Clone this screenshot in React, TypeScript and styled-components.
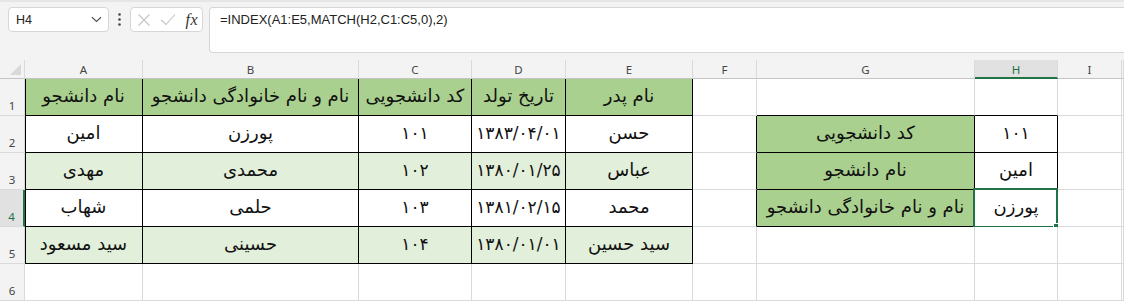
import React from 'react'
import styled, { createGlobalStyle } from 'styled-components'

const GlobalStyle = createGlobalStyle`
  html, body { margin: 0; padding: 0; background: #fff; overflow: hidden; }
  body { font-family: "Liberation Sans", Arial, sans-serif; }
`

const GREEN = '#a9d08e'
const PALE = '#e2efda'
const GRID = '#dadada'
const SEL = '#217346'

const colNames = ['A', 'B', 'C', 'D', 'E', 'F', 'G', 'H', 'I']
const colWidths = '25px 118px 216px 113px 94px 127px 64px 218px 83px 64px 1fr'

type CellData = { text: string; fill?: string; boxed?: boolean; num?: boolean }

// row index -> column index (0 = A) -> data
const sheet: Record<number, Record<number, CellData>> = {
  1: {
    0: { text: 'نام دانشجو', fill: GREEN, boxed: true },
    1: { text: 'نام و نام خانوادگی دانشجو', fill: GREEN, boxed: true },
    2: { text: 'کد دانشجویی', fill: GREEN, boxed: true },
    3: { text: 'تاریخ تولد', fill: GREEN, boxed: true },
    4: { text: 'نام پدر', fill: GREEN, boxed: true },
  },
  2: {
    0: { text: 'امین', boxed: true },
    1: { text: 'پورزن', boxed: true },
    2: { text: '۱۰۱', boxed: true, num: true },
    3: { text: '۱۳۸۳/۰۴/۰۱', boxed: true, num: true },
    4: { text: 'حسن', boxed: true },
    6: { text: 'کد دانشجویی', fill: GREEN, boxed: true },
    7: { text: '۱۰۱', boxed: true, num: true },
  },
  3: {
    0: { text: 'مهدی', fill: PALE, boxed: true },
    1: { text: 'محمدی', fill: PALE, boxed: true },
    2: { text: '۱۰۲', fill: PALE, boxed: true, num: true },
    3: { text: '۱۳۸۰/۰۱/۲۵', fill: PALE, boxed: true, num: true },
    4: { text: 'عباس', fill: PALE, boxed: true },
    6: { text: 'نام دانشجو', fill: GREEN, boxed: true },
    7: { text: 'امین', boxed: true },
  },
  4: {
    0: { text: 'شهاب', boxed: true },
    1: { text: 'حلمی', boxed: true },
    2: { text: '۱۰۳', boxed: true, num: true },
    3: { text: '۱۳۸۱/۰۲/۱۵', boxed: true, num: true },
    4: { text: 'محمد', boxed: true },
    6: { text: 'نام و نام خانوادگی دانشجو', fill: GREEN, boxed: true },
    7: { text: 'پورزن', boxed: true },
  },
  5: {
    0: { text: 'سید مسعود', fill: PALE, boxed: true },
    1: { text: 'حسینی', fill: PALE, boxed: true },
    2: { text: '۱۰۴', fill: PALE, boxed: true, num: true },
    3: { text: '۱۳۸۰/۰۱/۰۱', fill: PALE, boxed: true, num: true },
    4: { text: 'سید حسین', fill: PALE, boxed: true },
  },
}

const isBoxed = (r: number, c: number) => !!sheet[r]?.[c]?.boxed
const activeRow = 4
const activeCol = 7

const Toolbar = styled.div`
  height: 60px;
  box-sizing: border-box;
  background: #f3f3f3;
  border-top: 2px solid #e6e6e6;
  display: flex;
  align-items: flex-start;
  padding: 5px 0 0 8px;
`

const NameBox = styled.div`
  width: 101px;
  height: 25px;
  box-sizing: border-box;
  background: #fff;
  border: 1px solid #d6d6d6;
  border-radius: 4px;
  display: flex;
  align-items: center;
  justify-content: space-between;
  padding: 0 6px 0 7px;
  font-size: 12.5px;
  color: #222;
`

const Dots = styled.div`
  width: 21px;
  height: 25px;
  display: flex;
  align-items: center;
  justify-content: center;
`

const FuncBox = styled.div`
  width: 73px;
  height: 25px;
  box-sizing: border-box;
  background: #fff;
  border: 1px solid #d6d6d6;
  border-radius: 4px;
  display: flex;
  align-items: center;
  justify-content: space-between;
  padding: 0 4px 0 6px;
`

const Fx = styled.span`
  font-family: "Liberation Serif", "Times New Roman", serif;
  font-style: italic;
  font-size: 16px;
  color: #333;
  letter-spacing: 0.5px;
`

const FormulaBox = styled.div`
  flex: 1;
  height: 46px;
  margin-left: 6px;
  box-sizing: border-box;
  background: #fff;
  border: 1px solid #d6d6d6;
  border-right: none;
  border-radius: 4px 0 0 4px;
  padding: 4px 0 0 10px;
  font-size: 13px;
  color: #222;
  line-height: 16px;
`

const Sheet = styled.div`
  display: grid;
  grid-template-columns: ${colWidths};
  grid-template-rows: 19px repeat(6, 37px);
`

const Corner = styled.div`
  background: #f3f3f3;
  border-right: 1px solid ${GRID};
  border-bottom: 1px solid #c4c4c4;
  box-sizing: border-box;
  display: flex;
  align-items: flex-end;
  justify-content: flex-end;
  padding: 0 3px 3px 0;
`

const ColHead = styled.div<{ $active?: boolean }>`
  box-sizing: border-box;
  background: ${p => (p.$active ? '#e1e1e1' : '#f3f3f3')};
  border-right: 1px solid ${GRID};
  border-bottom: ${p => (p.$active ? `2px solid ${SEL}` : '1px solid #c4c4c4')};
  color: ${p => (p.$active ? SEL : '#444')};
  font-family: "Noto Sans", "Open Sans", sans-serif;
  font-size: 11.5px;
  display: flex;
  align-items: center;
  justify-content: center;
  padding-top: ${p => (p.$active ? '1px' : '0')};
`

const RowHead = styled.div<{ $active?: boolean }>`
  box-sizing: border-box;
  background: ${p => (p.$active ? '#e1e1e1' : '#f3f3f3')};
  border-right: ${p => (p.$active ? `2px solid ${SEL}` : `1px solid ${GRID}`)};
  border-bottom: 1px solid ${GRID};
  color: ${p => (p.$active ? SEL : '#444')};
  font-family: "Noto Sans", "Open Sans", sans-serif;
  font-size: 11.5px;
  display: flex;
  align-items: flex-end;
  justify-content: center;
  padding-bottom: 2px;
`

const Cell = styled.div<{ $fill?: string; $right: string; $bottom: string; $leftEdge?: boolean; $num?: boolean }>`
  position: relative;
  box-sizing: border-box;
  background: ${p => p.$fill || '#fff'};
  border-right: 1px solid ${p => p.$right};
  border-bottom: 1px solid ${p => p.$bottom};
  box-shadow: ${p => (p.$leftEdge ? 'inset 1px 0 0 #000' : 'none')};
  display: flex;
  align-items: center;
  justify-content: center;
  white-space: nowrap;
  font-family: "DejaVu Sans", "Noto Sans", sans-serif;
  font-size: ${p => (p.$num ? '17px' : '18px')};
  color: #111;
  padding-bottom: 3px;
`

const Selection = styled.div`
  position: absolute;
  left: -2px;
  top: -2px;
  right: -1px;
  bottom: -2px;
  border: 2px solid ${SEL};
  pointer-events: none;
  &::after {
    content: '';
    position: absolute;
    right: -4px;
    bottom: -4px;
    width: 5px;
    height: 5px;
    background: ${SEL};
    border: 1px solid #fff;
  }
`

export default function App() {
  const rows = [1, 2, 3, 4, 5, 6]
  return (
    <>
      <GlobalStyle />
      <Toolbar>
        <NameBox>
          <span>H4</span>
          <svg width="11" height="7" viewBox="0 0 11 7">
            <path d="M1 1.2 L5.5 5.5 L10 1.2" fill="none" stroke="#555" strokeWidth="1.2" />
          </svg>
        </NameBox>
        <Dots>
          <svg width="3" height="13" viewBox="0 0 3 13">
            <circle cx="1.5" cy="1.5" r="1.3" fill="#444" />
            <circle cx="1.5" cy="6.5" r="1.3" fill="#444" />
            <circle cx="1.5" cy="11.5" r="1.3" fill="#444" />
          </svg>
        </Dots>
        <FuncBox>
          <svg width="14" height="14" viewBox="0 0 14 14">
            <path d="M1.5 1.5 L12.5 12.5 M12.5 1.5 L1.5 12.5" stroke="#c4c4c4" strokeWidth="1.1" fill="none" />
          </svg>
          <svg width="16" height="13" viewBox="0 0 16 13">
            <path d="M1 7 L6 11.5 L15 1.5" stroke="#c4c4c4" strokeWidth="1.1" fill="none" />
          </svg>
          <Fx>fx</Fx>
        </FuncBox>
        <FormulaBox>=INDEX(A1:E5,MATCH(H2,C1:C5,0),2)</FormulaBox>
      </Toolbar>
      <Sheet>
        <Corner>
          <svg width="11" height="11" viewBox="0 0 11 11">
            <polygon points="11,0 11,11 0,11" fill="#d9d9d9" />
          </svg>
        </Corner>
        {colNames.map((n, i) => (
          <ColHead key={n} $active={i === activeCol}>{n}</ColHead>
        ))}
        <ColHead />
        {rows.map(r => (
          <React.Fragment key={r}>
            <RowHead $active={r === activeRow}>{r}</RowHead>
            {colNames.map((_, c) => {
              const d = sheet[r]?.[c]
              const boxed = isBoxed(r, c)
              const right = boxed || isBoxed(r, c + 1) ? '#000' : GRID
              const bottom = boxed || isBoxed(r + 1, c) ? '#000' : GRID
              return (
                <Cell
                  key={c}
                  $fill={d?.fill}
                  $right={right}
                  $bottom={bottom}
                  $leftEdge={boxed && c === 0}
                  $num={d?.num}
                >
                  {d?.text}
                  {r === activeRow && c === activeCol && <Selection />}
                </Cell>
              )
            })}
            <Cell $right={GRID} $bottom={GRID} />
          </React.Fragment>
        ))}
      </Sheet>
    </>
  )
}
